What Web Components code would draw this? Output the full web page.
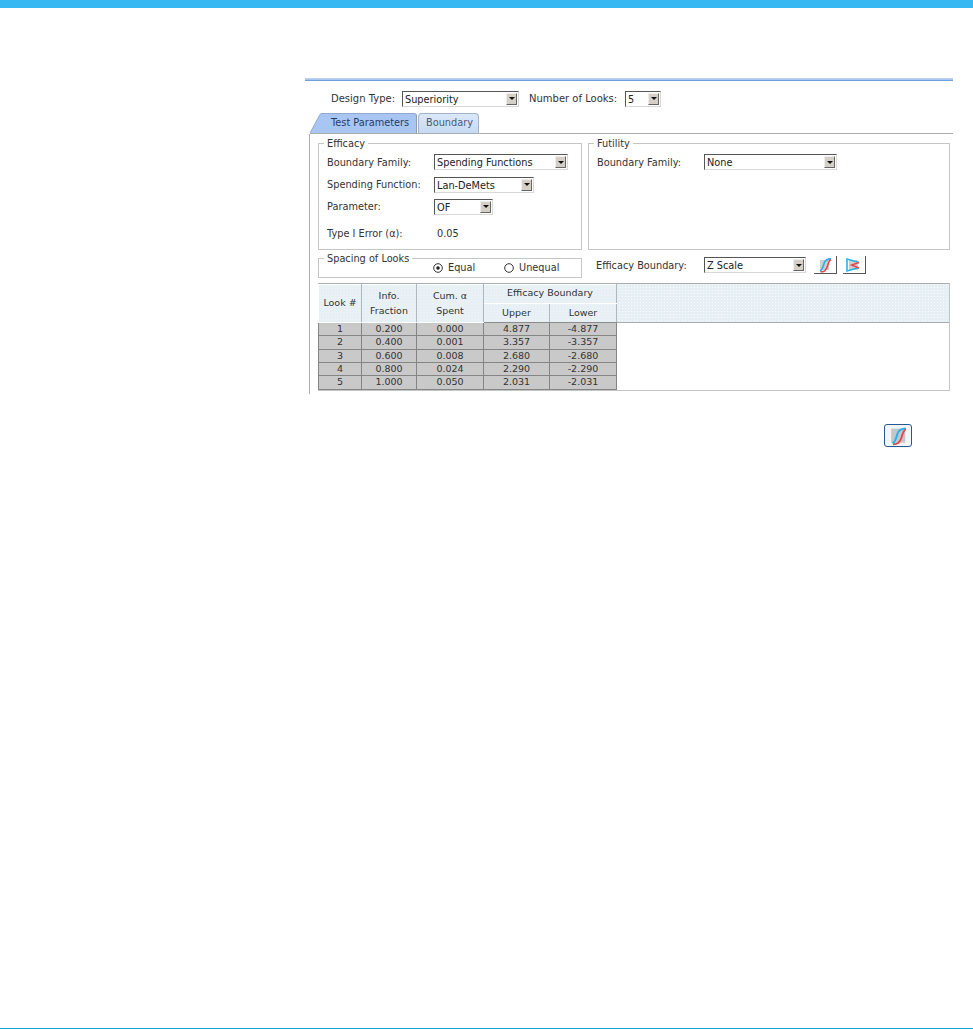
<!DOCTYPE html>
<html>
<head>
<meta charset="utf-8">
<title>Boundary</title>
<style>
  html, body { margin: 0; height: 100%; background: #fff; }
  body { font: 9.75px "DejaVu Sans", sans-serif; color: #333; }
</style>
</head>
<body>
<design-page>
  <design-panel>
    <design-row slot="top">
      <span style="margin-left:26px;width:71px">Design Type:</span>
      <combo-box value="Superiority" width="117"></combo-box>
      <span style="margin-left:10px;width:96px">Number of Looks:</span>
      <combo-box value="5" width="36"></combo-box>
    </design-row>
    <tab-strip slot="tabs"></tab-strip>
    <div class="forms" slot="body" style="display:grid;grid-template-columns:264px 362px;column-gap:6px;row-gap:8px;margin:9px 0 0 8px;width:632px">
      <group-box label="Efficacy" style="height:107px">
        <form-line label="Boundary Family:"><combo-box value="Spending Functions" width="134"></combo-box></form-line>
        <form-line label="Spending Function:"><combo-box value="Lan-DeMets" width="100"></combo-box></form-line>
        <form-line label="Parameter:"><combo-box value="OF" width="59"></combo-box></form-line>
        <form-line label="Type I Error (&#945;):" style="margin-top:4px"><span style="margin-left:3px">0.05</span></form-line>
      </group-box>
      <group-box label="Futility" style="height:107px">
        <form-line label="Boundary Family:"><combo-box value="None" width="133"></combo-box></form-line>
      </group-box>
      <group-box label="Spacing of Looks" style="height:20px">
        <div style="display:flex;margin:-4px 0 0 106px">
          <radio-option label="Equal" checked style="width:71px"></radio-option>
          <radio-option label="Unequal"></radio-option>
        </div>
      </group-box>
      <div style="display:flex;align-items:center;height:16px;margin:-1px 0 0 8px">
        <span style="width:108px">Efficacy Boundary:</span>
        <combo-box value="Z Scale" width="102"></combo-box>
        <chart-button kind="s" style="margin-left:8px"></chart-button>
        <chart-button kind="v" style="margin-left:6px"></chart-button>
      </div>
      <look-table style="grid-column:1 / 3"></look-table>
    </div>
    <chart-button slot="foot" kind="s" framed></chart-button>
  </design-panel>
</design-page>

<script>
class DesignPage extends HTMLElement {
  connectedCallback() {
    if (this.shadowRoot) return;
    this.attachShadow({ mode: "open" }).innerHTML = `
      <style>
        :host { display: flex; flex-direction: column; height: 100vh; box-sizing: border-box;
          border-top: 8px solid #38b8f2; border-bottom: 1px solid #1c9fd8; }
        main { flex: 1; padding: 70px 20px 0 305px; }
      </style>
      <main><slot></slot></main>`;
  }
}
customElements.define("design-page", DesignPage);

class DesignPanel extends HTMLElement {
  connectedCallback() {
    if (this.shadowRoot) return;
    this.attachShadow({ mode: "open" }).innerHTML = `
      <style>
        :host { display: block; }
        .rule { height: 3px; background: linear-gradient(#bcd3f4 0 1px, #a9c6f0 1px 2px, #6f9fe0 2px); }
        .top { padding-top: 10px; }
        .body { display: flow-root; margin-left: 4px; border-left: 1px solid #a9adad; height: 260px; }
        .foot { display: flex; justify-content: flex-end; padding: 30px 41px 0 0; }
      </style>
      <div class="rule"></div>
      <div class="top"><slot name="top"></slot></div>
      <slot name="tabs"></slot>
      <div class="body"><slot name="body"></slot></div>
      <div class="foot"><slot name="foot"></slot></div>`;
  }
}
customElements.define("design-panel", DesignPanel);

class DesignRow extends HTMLElement {
  connectedCallback() {
    if (this.shadowRoot) return;
    this.attachShadow({ mode: "open" }).innerHTML = `
      <style>:host { display: flex; align-items: center; height: 15px; font-size: 10px; }
      ::slotted(combo-box) { font-size: 9.75px; }</style><slot></slot>`;
  }
}
customElements.define("design-row", DesignRow);

class ComboBox extends HTMLElement {
  connectedCallback() {
    if (this.shadowRoot) return;
    this.attachShadow({ mode: "open" }).innerHTML = `
      <style>
        :host { display: inline-flex; box-sizing: border-box; height: 16px; background: #fff;
          border: 1px solid; border-color: #555 #d8d8d4 #d8d8d4 #555; }
        .v { flex: 1; padding: 1px 0 0 2px; line-height: 13px; color: #222; white-space: nowrap; overflow: hidden; }
        .b { width: 11px; margin: 1px 1px 1px 0; box-sizing: border-box; background: #d4d0c8;
          border: 1px solid; border-color: #eee #666 #666 #eee; display: flex; align-items: center; justify-content: center; }
        .b i { width: 0; height: 0; border: 3px solid transparent; border-top: 3px solid #111; border-bottom: 0; }
      </style>
      <div class="v">${this.getAttribute("value")}</div>
      <div class="b"><i></i></div>`;
    this.style.width = this.getAttribute("width") + "px";
  }
}
customElements.define("combo-box", ComboBox);

class TabStrip extends HTMLElement {
  connectedCallback() {
    if (this.shadowRoot) return;
    this.attachShadow({ mode: "open" }).innerHTML = `
      <style>
        :host { display: flex; align-items: flex-start; box-sizing: border-box; height: 21px; margin: 7px 0 0 5px;
          border-bottom: 1px solid #a9adad; }
        svg { display: block; }
        .tab { height: 20px; box-sizing: border-box; display: flex; align-items: center; padding-bottom: 2px; }
        .first { width: 95px; background: #a9c6f2; color: #1f3c66; border-top: 1px solid #8faad0;
          border-right: 1px solid #8c9bb0; border-radius: 0 3px 0 0; padding-left: 9px; }
        .second { width: 61px; margin-left: 1px; background: linear-gradient(#dbe8f8, #c6daf4); color: #4a5a70;
          border: 1px solid #9fb4cc; border-bottom: 0; border-radius: 4px 4px 0 0; padding-left: 7px; }
      </style>
      <svg width="12" height="20" viewBox="0 0 12 20"><path d="M0 20 L10 1.500 Q11 0 12 0 V20Z" fill="#a9c6f2"/><path d="M0 20 L10 1.500 Q11 0.500 12 0.500" fill="none" stroke="#8faad0"/></svg>
      <div class="tab first">Test Parameters</div>
      <div class="tab second">Boundary</div>`;
  }
}
customElements.define("tab-strip", TabStrip);

class GroupBox extends HTMLElement {
  connectedCallback() {
    if (this.shadowRoot) return;
    this.attachShadow({ mode: "open" }).innerHTML = `
      <style>
        :host { display: block; box-sizing: border-box; position: relative;
          border: 1px solid #c4c6c6; padding: 7px 0 0 8px; }
        .legend { position: absolute; top: -6px; left: 5px; padding: 0 3px; background: #fff; line-height: 12px; }
      </style>
      <div class="legend">${this.getAttribute("label")}</div>
      <slot></slot>`;
  }
}
customElements.define("group-box", GroupBox);

class FormLine extends HTMLElement {
  connectedCallback() {
    if (this.shadowRoot) return;
    this.attachShadow({ mode: "open" }).innerHTML = `
      <style>
        :host { display: flex; align-items: center; height: 22.4px; }
        .l { width: 107px; }
      </style>
      <div class="l">${this.getAttribute("label")}</div>
      <slot></slot>`;
  }
}
customElements.define("form-line", FormLine);

class RadioOption extends HTMLElement {
  connectedCallback() {
    if (this.shadowRoot) return;
    const dot = this.hasAttribute("checked") ? '<circle cx="5" cy="5" r="1.800" fill="#222"/>' : "";
    this.attachShadow({ mode: "open" }).innerHTML = `
      <style>
        :host { display: flex; align-items: center; gap: 5px; }
        svg { display: block; }
      </style>
      <svg width="10" height="10" viewBox="0 0 10 10"><circle cx="5" cy="5" r="4.300" fill="#fff" stroke="#333"/>${dot}</svg>
      <span>${this.getAttribute("label")}</span>`;
  }
}
customElements.define("radio-option", RadioOption);

class ChartButton extends HTMLElement {
  connectedCallback() {
    if (this.shadowRoot) return;
    const framed = this.hasAttribute("framed");
    const back = framed
      ? '<rect x="5" y="3" width="11.500" height="11.500" fill="#c4c6ca"/>'
      : '<rect x="6" y="4" width="9" height="10" fill="#cfcfcf"/>';
    const s = `${back}
      <path d="M6 15 C8.500 14 9 11 10 7.500 C11 4 13 2.800 17 2.800" fill="none" stroke="#27b4ec" stroke-width="1.700"/>
      <path d="M6.500 15.800 C10 15.800 12 15 13.500 10 C14.500 6.500 15 4.500 17 3.500" fill="none" stroke="#e8434a" stroke-width="1.500"/>`;
    const v = `${back}
      <path d="M16 11.500 L4 15 V3 L16 6.500" fill="none" stroke="#27b4ec" stroke-width="1.600"/>
      <path d="M16 6.500 L8.500 9 L16 12" fill="none" stroke="#e8434a" stroke-width="1.400"/>`;
    this.attachShadow({ mode: "open" }).innerHTML = `
      <style>
        :host { display: flex; align-items: center; justify-content: center; flex: none; box-sizing: border-box;
          width: 23px; height: 18px; background: #fff; overflow: hidden; }
        :host([framed]) { width: 28px; height: 23px; border: 1.500px solid #26598f; border-radius: 3px; background: #f2f6fb; }
        :host(:not([framed])) { border-right: 1px solid #555; border-bottom: 1px solid #555; }
        svg { display: block; flex: none; width: 22px; height: 18px; }
        :host([framed]) svg { width: 27px; height: 22px; }
      </style>
      <svg viewBox="0 0 22 18">${this.getAttribute("kind") === "v" ? v : s}</svg>`;
  }
}
customElements.define("chart-button", ChartButton);

class LookTable extends HTMLElement {
  connectedCallback() {
    if (this.shadowRoot) return;
    const rows = [
      ["1", "0.200", "0.000", "4.877", "-4.877"],
      ["2", "0.400", "0.001", "3.357", "-3.357"],
      ["3", "0.600", "0.008", "2.680", "-2.680"],
      ["4", "0.800", "0.024", "2.290", "-2.290"],
      ["5", "1.000", "0.050", "2.031", "-2.031"]
    ];
    const body = rows.map(r => `<tr>${r.map(c => `<td>${c}</td>`).join("")}</tr>`).join("");
    // light blue ground with a white dot every 3px
    const dots = `background-color: #e6eff3;
      background-image: conic-gradient(from 0deg at 1px 1px, transparent 75%, #fafcfd 0);
      background-size: 3px 3px;`;
    this.attachShadow({ mode: "open" }).innerHTML = `
      <style>
        :host { display: block; box-sizing: border-box; width: 632px; height: 108px; margin-top: -3px;
          border: 1px solid #c4c6c6; border-top-color: #a9adad; background: #fff; position: relative; font-size: 9.5px; }
        .fill { height: 39px; border-bottom: 1px solid #a9adad; box-sizing: border-box; ${dots} }
        table { position: absolute; left: -1px; top: 0; border-collapse: collapse; table-layout: fixed; width: 298px; }
        th { box-sizing: border-box; font-weight: normal; height: 19px; padding: 0 0 1px; line-height: 15px; color: #333;
          border: 1px solid #fff; border-right-color: #aeb8be; border-bottom-color: #fff; ${dots} }
        th.up { padding-bottom: 3px; }
        th.dbl { padding-bottom: 2px; }
        thead tr:last-child th { border-bottom-color: #8c8c8c; }
        td { box-sizing: border-box; height: 13.33px; padding: 0; line-height: 12px; text-align: center; background: #c9c9c9;
          color: #333; border: 1px solid #858585; }
      </style>
      <div class="fill"></div>
      <table>
        <colgroup><col style="width:43px"><col style="width:55px"><col style="width:67px"><col style="width:66px"><col style="width:67px"></colgroup>
        <thead>
          <tr><th rowspan="2" class="dbl">Look #</th><th rowspan="2" class="dbl">Info.<br>Fraction</th><th rowspan="2" class="dbl">Cum. &#945;<br>Spent</th><th colspan="2" class="up">Efficacy Boundary</th></tr>
          <tr><th>Upper</th><th>Lower</th></tr>
        </thead>
        <tbody>${body}</tbody>
      </table>`;
  }
}
customElements.define("look-table", LookTable);
</script>
</body>
</html>
